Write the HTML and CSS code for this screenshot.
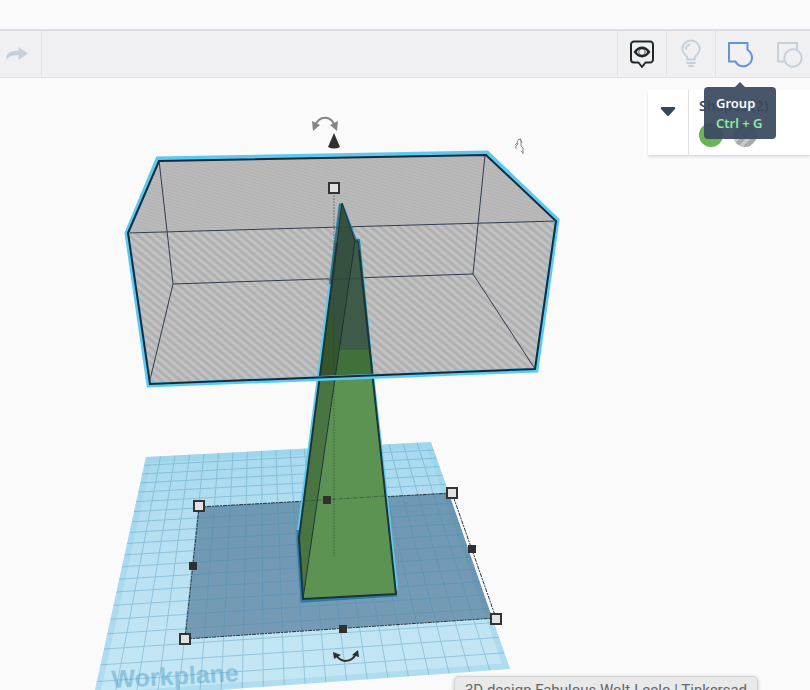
FILE: index.html
```html
<!DOCTYPE html>
<html lang="en">
<head>
<meta charset="utf-8">
<title>3D design Fabulous Wolt-Leelo | Tinkercad</title>
<link rel="stylesheet" href="styles.css">
</head>
<body>
<header class="topbar"></header>
<nav class="toolbar" aria-label="Editing tools">
  <button class="tool tool-redo" type="button" aria-label="Redo">
    <svg width="24" height="16" viewBox="0 0 24 16"><path class="fill-muted" d="M1.500 14V10C3 6 8 4.800 13.500 4.800V1L23 7.500L13.500 14V9.300C8 8.800 4 10 1.500 14Z"/></svg>
  </button>
  <div class="spacer"></div>
  <button class="tool" type="button" aria-label="Show all">
    <svg width="28" height="32" viewBox="0 0 28 32"><path class="ink" d="M6 3.500H22A3 3 0 0 1 25 6.500V21.500A3 3 0 0 1 22 24.500H17.500L14 29L10.500 24.500H6A3 3 0 0 1 3 21.500V6.500A3 3 0 0 1 6 3.500Z"/><path class="ink-fill" fill-rule="evenodd" d="M5.500 14C8.500 10 11 8.600 14 8.600S19.500 10 22.500 14C19.500 18 17 19.400 14 19.400S8.500 18 5.500 14ZM8.800 14C10 15.800 11 16.600 12 17C9.800 15 9.800 13 12 11C11 11.400 10 12.200 8.800 14ZM19.200 14C18 12.200 17 11.400 16 11C18.200 13 18.200 15 16 17C17 16.600 18 15.800 19.200 14ZM14 11.200A2.800 2.800 0 1 0 14 16.800A2.800 2.800 0 1 0 14 11.200Z"/></svg>
  </button>
  <button class="tool" type="button" aria-label="Hints">
    <svg width="28" height="32" viewBox="0 0 28 32"><path class="muted" d="M10.300 21.500V20C10.300 17.500 5.300 16 5.300 11.300A8.700 8.700 0 0 1 22.700 11.300C22.700 16 17.700 17.500 17.700 20V21.500Z"/><path class="muted thin" d="M9 11C9 8.500 10.500 7 12.500 6.500M10 25H18M12 28H16"/></svg>
  </button>
  <button class="tool" type="button" aria-label="Group">
    <svg width="28" height="32" viewBox="0 0 28 32"><path class="active" d="M3 5H21.500V12A8.700 8.700 0 1 1 9.500 23.500H3Z"/></svg>
  </button>
  <button class="tool tool-last" type="button" aria-label="Ungroup">
    <svg width="28" height="32" viewBox="0 0 28 32"><path class="muted" d="M9 23.500H3V5H22V11"/><circle class="muted" cx="18" cy="20" r="8.700"/></svg>
  </button>
</nav>
<main class="scene">
  <svg class="canvas" viewBox="0 78 810 612" preserveAspectRatio="xMidYMid slice" role="img" aria-label="Workplane with a pyramid and a hole box">
    <defs>
      <linearGradient id="plane" x1="0" y1="0" x2="0" y2="1"><stop offset="0" stop-color="#a8daef"/><stop offset=".5" stop-color="#bae1f2"/><stop offset="1" stop-color="#c6e8f5"/></linearGradient>
      <pattern id="stripes" width="8" height="6" patternUnits="userSpaceOnUse" patternTransform="rotate(40)"><rect width="8" height="6" fill="#c2c2c2"/><rect width="8" height="3" fill="#b0b0b0"/></pattern>
      <pattern id="fine" width="8" height="3" patternUnits="userSpaceOnUse" patternTransform="rotate(16)"><rect width="8" height="3" fill="#bababa"/><rect width="8" height="1" fill="#b2b2b2"/></pattern>
      <clipPath id="planeClip"><path d="M146 457L431 442L510 669L93 699Z"/></clipPath>
      <clipPath id="boxClip"><path d="M158 159L486 153L557 221L536 370L149 385L127 233Z"/></clipPath>
    </defs>

    <path d="M146 457L431 442L510 669L93 699Z" fill="url(#plane)"/>
    <g clip-path="url(#planeClip)">
      <path class="plane-edge" d="M146 457L431 442L510 669L93 699Z"/>
      <text class="plane-label" transform="translate(112 688) rotate(-3)">Workplane</text>
      <path class="shadow" d="M199 507L452 493L496 618L185 639Z"/>
      <g id="grid" class="grid"></g>
    </g>
    <path class="dashes" d="M199 507L452 493M199 507L185 639L496 618L452 493"/>

    <path d="M158 159L486 153L557 221L127 233Z" fill="url(#fine)"/>
    <path d="M127 233L557 221L536 370L149 385Z" fill="url(#stripes)"/>
    <path class="wire" d="M159 160L173 284L473 274L485 155M173 284L149 384M473 274L535 369M127 233L557 221"/>

    <path class="halo" d="M299 535L319 380L341 204L355 241L358 241L372 378L396 590"/>
    <path class="halo-low" d="M299 530V540L303 600L397 594"/>
    <path d="M342 203L355 241L303 599L299 538Z" fill="#497542"/>
    <path d="M355 241H358L396 594L303 599Z" fill="#5c9352"/>
    <g clip-path="url(#boxClip)">
      <path class="halo-dim" d="M331 284L341 204L355 241H358L371 370"/>
      <path d="M342 203L355 241L330 425L314 425Z" fill="#34562d"/>
      <path d="M355 241H358L377 425H328Z" fill="#41713a"/>
      <path d="M342 203L355 241L340 350L330 305L329 303Z" fill="#375140"/>
      <path d="M355 241H358L370 350H340Z" fill="#3d5b48"/>
    </g>
    <path class="edge" d="M337 243L299 538L303 599L396 594L359 250"/>
    <path class="edge thin" d="M337 243L342 203L355 241H358L359 250M355 241L303 599"/>
    <path class="wire faint" d="M336 228L353 227M327 280L361 278"/>
    <path class="axis" d="M334 195V556"/>
    <path class="through" d="M304 501L386 496"/>

    <path class="box-glow" d="M158 159L487 153L557 220L536 370L149 385L127 233Z"/>
    <path class="box-edge" d="M159 161L486 155L556 221L535 369L150 384L128 233Z"/>

    <g class="handle">
      <rect x="329" y="183" width="10" height="10"/>
      <rect x="194" y="501" width="10" height="10"/>
      <rect x="447" y="488" width="10" height="10"/>
      <rect x="491" y="614" width="10" height="10"/>
      <rect x="180" y="634" width="10" height="10"/>
    </g>
    <g class="dark">
      <rect x="323" y="496" width="8" height="8"/>
      <rect x="468" y="545" width="8" height="8"/>
      <rect x="189" y="562" width="8" height="8"/>
      <rect x="339" y="625" width="8" height="8"/>
      <path d="M334 133L340 147Q334 150 328 147Z"/>
    </g>
    <g class="rotate-top"><path class="arc" d="M315 126C319 115 331 115 335 126"/><path d="M312 121L313 131L320 125ZM338 121L337 131L330 125Z"/></g>
    <g class="rotate-bottom"><path class="arc" d="M336 655C341 663 351 663 356 654"/><path d="M333 652L334 659L341 655ZM358 650L359 657L352 655Z"/></g>
    <g class="rotate-side"><path d="M516 149V146L518 144L517 142L519 139L521 141V146L523 148V154M515 145L517 143M521 151L523 153M520 138L522 143"/></g>
  </svg>

  <section class="inspector">
    <button class="collapse" type="button" aria-label="Collapse"><svg width="16" height="10" viewBox="0 0 16 10"><path class="caret" d="M1.500 0H14.500Q16 1 15 2L9 8.500Q8 9.500 7 8.500L1 2Q0 1 1.500 0Z"/></svg></button>
    <div class="inspector-body">
      <h2 class="inspector-title">Shapes (2)</h2>
      <div class="swatches">
        <button class="swatch solid" type="button" aria-label="Solid"></button>
        <button class="swatch hole" type="button" aria-label="Hole"></button>
      </div>
    </div>
  </section>

  <div class="tooltip" role="tooltip"><span>Group</span><span class="shortcut">Ctrl + G</span></div>
  <div class="page-title">3D design Fabulous Wolt-Leelo | Tinkercad</div>
</main>
<script src="grid.js"></script>
</body>
</html>
```
FILE: styles.css
```css
* { box-sizing: border-box; }

body {
  margin: 0;
  height: 100vh;
  display: flex;
  flex-direction: column;
  overflow: hidden;
  background: #fafafa;
  font-family: "Noto Sans", "Open Sans", sans-serif;
}

button { border: 0; padding: 0; margin: 0; background: none; }
svg { display: block; }

.topbar { height: 29px; flex: none; }

.toolbar {
  display: flex;
  flex: none;
  height: 49px;
  background: #f0f0f3;
  border-top: 2px solid #dcdfe5;
  border-bottom: 1px solid #dfe2e8;
}
.spacer { flex: 1; }
.tool {
  width: 49px;
  display: flex;
  align-items: center;
  justify-content: center;
  border-left: 1px solid #dfe2e8;
}
.tool-redo {
  width: 42px;
  border-left: 0;
  border-right: 1px solid #dfe2e8;
  padding-right: 8px;
}
.tool-last { border-left: 0; width: 46px; padding-left: 4px; }

.fill-muted { fill: #c6d0da; }
.muted, .active, .ink { fill: none; stroke-width: 2; stroke-linejoin: round; }
.muted { stroke: #c6d0da; }
.muted.thin { stroke-linecap: round; }
.active { stroke: #6393db; }
.ink { stroke: #1e292d; }
.ink-fill { fill: #1e292d; }

.scene { position: relative; flex: 1; min-height: 0; overflow: hidden; }
.canvas { width: 100%; height: 100%; }

.plane-edge { fill: none; stroke: #91cfe8; stroke-width: 12; opacity: .4; }
.plane-label { font: bold 25px "Liberation Sans", sans-serif; fill: #8dc5de; }
.grid { stroke: #3f8db5; stroke-width: 1; opacity: .36; }
.shadow { fill: #2d5376; opacity: .5; }
.dashes { fill: none; stroke: #26343e; stroke-width: 1; stroke-dasharray: 4 1 2 1; }
.wire { fill: none; stroke: #303c50; stroke-width: 1; }
.faint { opacity: .6; }
.halo { fill: none; stroke: #5cc9ee; stroke-width: 5; }
.halo-low { fill: none; stroke: #287cac; stroke-width: 5; }
.halo-dim { fill: none; stroke: #36727f; stroke-width: 4; }
.edge { fill: none; stroke: #1d3434; stroke-width: 2; stroke-linejoin: round; }
.edge.thin { stroke-width: 1; }
.axis { stroke: #2c4238; stroke-width: 1; stroke-dasharray: 2 1; opacity: .5; }
.through { stroke: #29452b; stroke-width: 1; stroke-dasharray: 4 1 1 1; opacity: .6; }
.box-glow { fill: none; stroke: #5bcaf0; stroke-width: 5; }
.box-edge { fill: none; stroke: #18293c; stroke-width: 2; }
.handle { fill: #e2e2e2; stroke: #333; stroke-width: 2; }
.dark { fill: #303030; }
.rotate-top { fill: #858585; stroke: #858585; }
.rotate-bottom { fill: #303030; stroke: #303030; }
.rotate-top path, .rotate-bottom path { stroke-width: 0; }
.rotate-top .arc, .rotate-bottom .arc { fill: none; stroke-width: 2; }
.rotate-side { fill: none; stroke: #8a8a8a; stroke-width: 1; }

.inspector {
  position: absolute;
  top: 12px;
  right: 0;
  width: 162px;
  height: 65px;
  display: flex;
  background: #fff;
  box-shadow: 0 2px 2px #d9dde6;
}
.collapse {
  width: 41px;
  display: flex;
  justify-content: center;
  padding-top: 17px;
  border-right: 1px solid #dfe2ea;
}
.caret { fill: #36475c; }
.inspector-body { padding: 4px 0 0 10px; }
.inspector-title {
  margin: 0;
  font-size: 14px;
  font-weight: 600;
  line-height: 24px;
  color: #3a4a62;
  white-space: nowrap;
}
.swatches { display: flex; gap: 10px; padding-top: 5px; }
.swatch { width: 24px; height: 24px; border-radius: 50%; }
.solid { background: #67b557; }
.hole { background: repeating-linear-gradient(135deg, #a8a8a8 0 4px, #c9c9c9 4px 8px); }

.tooltip {
  position: absolute;
  top: 9px;
  right: 34px;
  width: 72px;
  height: 52px;
  padding: 6px 0 0 12px;
  display: flex;
  flex-direction: column;
  border-radius: 4px;
  background: rgba(58, 73, 95, .93);
  color: #fff;
  font-size: 13px;
  font-weight: 600;
  line-height: 20px;
  white-space: nowrap;
}
.tooltip::before {
  content: "";
  position: absolute;
  left: 31px;
  top: -5px;
  border: 5px solid transparent;
  border-top: 0;
  border-bottom-color: #47546a;
}
.shortcut { color: #88ee9f; }

.page-title {
  position: absolute;
  right: 52px;
  bottom: -12px;
  height: 26px;
  padding: 0 10px;
  border: 1px solid #d2d2d2;
  border-radius: 5px;
  background: #e9e9e9;
  box-shadow: 0 1px 4px rgba(0, 0, 0, .2);
  color: #666;
  font: 15px/26px Roboto, sans-serif;
  white-space: nowrap;
}
```
FILE: grid.js
```js
// Projects a 20 by 20 unit grid onto the four corners of the workplane.
const [a, b, c, d] = [[146, 457], [431, 442], [510, 669], [93, 699]];
const sx = a[0] - b[0] + c[0] - d[0], sy = a[1] - b[1] + c[1] - d[1];
const dx1 = b[0] - c[0], dx2 = d[0] - c[0], dy1 = b[1] - c[1], dy2 = d[1] - c[1];
const det = dx1 * dy2 - dx2 * dy1;
const g = (sx * dy2 - dx2 * sy) / det;
const h = (dx1 * sy - sx * dy1) / det;
function project(u, v) {
  const w = g * u + h * v + 1;
  return [
    ((b[0] - a[0] + g * b[0]) * u + (d[0] - a[0] + h * d[0]) * v + a[0]) / w,
    ((b[1] - a[1] + g * b[1]) * u + (d[1] - a[1] + h * d[1]) * v + a[1]) / w
  ];
}
const grid = document.getElementById("grid");
function addLine(p, q) {
  const line = document.createElementNS("http://www.w3.org/2000/svg", "line");
  line.setAttribute("x1", p[0]);
  line.setAttribute("y1", p[1]);
  line.setAttribute("x2", q[0]);
  line.setAttribute("y2", q[1]);
  grid.appendChild(line);
}
for (let i = 1; i < 20; i++) {
  addLine(project(i / 20, 0), project(i / 20, 1));
  addLine(project(0, i / 20), project(1, i / 20));
}
```
